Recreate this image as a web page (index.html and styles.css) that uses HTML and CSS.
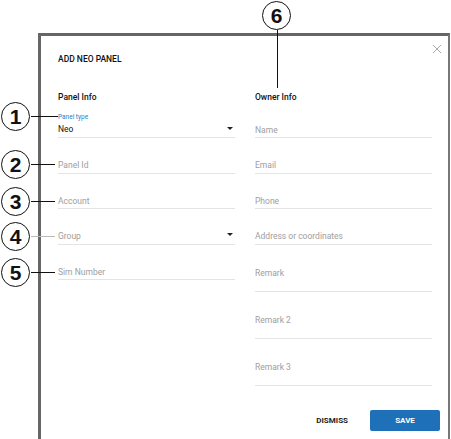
FILE: index.html
```html
<!DOCTYPE html>
<html>
<head>
<meta charset="utf-8">
<link rel="stylesheet" href="styles.css">
</head>
<body>
<div class="page">
  <div class="dialog">
    <div class="close">
      <svg width="10" height="10" viewBox="0 0 10 10"><path d="M1 1L9 9M9 1L1 9" stroke="#a8a8a8" stroke-width="1" fill="none"/></svg>
    </div>
    <div class="title">ADD NEO PANEL</div>
    <div class="columns">
      <div class="col">
        <div class="section">Panel Info</div>
        <div class="field first select">
          <div class="label">Panel type</div>
          <div class="value">Neo</div>
          <span class="caret"></span>
        </div>
        <div class="field"><span class="ph">Panel Id</span></div>
        <div class="field"><span class="ph">Account</span></div>
        <div class="field select"><span class="ph">Group</span><span class="caret"></span></div>
        <div class="field"><span class="ph">Sim Number</span></div>
      </div>
      <div class="col">
        <div class="section">Owner Info</div>
        <div class="field first"><span class="ph">Name</span></div>
        <div class="field"><span class="ph">Email</span></div>
        <div class="field"><span class="ph">Phone</span></div>
        <div class="field"><span class="ph">Address or coordinates</span></div>
        <div class="field tall"><span class="ph">Remark</span></div>
        <div class="field tall"><span class="ph">Remark 2</span></div>
        <div class="field tall"><span class="ph">Remark 3</span></div>
      </div>
    </div>
    <div class="actions">
      <button class="btn dismiss">DISMISS</button>
      <button class="btn save">SAVE</button>
    </div>
  </div>

  <div class="callout c1">1</div>
  <div class="callout c2">2</div>
  <div class="callout c3">3</div>
  <div class="callout c4">4</div>
  <div class="callout c5">5</div>
  <div class="callout c6">6</div>
  <div class="hline l1"></div>
  <div class="hline l2"></div>
  <div class="hline l3"></div>
  <div class="hline l4"></div>
  <div class="hline l5"></div>
  <div class="vline l6"></div>
</div>
</body>
</html>
```

FILE: styles.css
```css
html, body {
  margin: 0;
  padding: 0;
  background: #fff;
}
.page {
  position: relative;
  width: 451px;
  height: 439px;
  overflow: hidden;
  font-family: Roboto, "Liberation Sans", Arial, sans-serif;
}
.dialog {
  position: relative;
  margin: 33px 0 0 38px;
  width: 390px;
  height: 420px;
  border-top: 3px solid #666;
  border-left: 3px solid #666;
  border-right: 2px solid #777;
  padding: 0 0 0 17px;
  box-sizing: content-box;
}
.close {
  position: absolute;
  right: 6px;
  top: 8px;
  width: 10px;
  height: 10px;
  line-height: 0;
}
.title {
  font-size: 8.5px;
  font-weight: 500;
  color: #111;
  padding-top: 17px;
  height: 13px;
  line-height: 13px;
}
.columns {
  display: flex;
  gap: 20px;
  width: 374px;
  margin-top: 24px;
}
.col {
  flex: 1;
  display: flex;
  flex-direction: column;
}
.section {
  font-size: 8.5px;
  font-weight: 500;
  color: #111;
  height: 14px;
  line-height: 14px;
}
.field {
  position: relative;
  height: 35.5px;
  border-bottom: 1px solid #e4e4e4;
  box-sizing: border-box;
  font-size: 8.5px;
}
.field.first {
  height: 34px;
}
.ph {
  position: absolute;
  left: 0;
  top: 21px;
  line-height: 12px;
  color: #9e9e9e;
}
.field.first .ph {
  top: 20px;
}
.field.tall {
  height: 47px;
}
.field.tall .ph {
  top: 22px;
}
.label {
  position: absolute;
  left: 0;
  top: 9px;
  font-size: 6.5px;
  line-height: 8px;
  color: #2a7fc3;
}
.value {
  position: absolute;
  left: 0;
  top: 19px;
  line-height: 12px;
  color: #111;
}
.caret {
  position: absolute;
  right: 2px;
  top: 24px;
  width: 0;
  height: 0;
  border-left: 3.5px solid transparent;
  border-right: 3.5px solid transparent;
  border-top: 3.5px solid #222;
}
.field.first .caret {
  top: 22.5px;
}
.actions {
  display: flex;
  justify-content: flex-end;
  align-items: center;
  gap: 22px;
  width: 382px;
  margin-top: 24px;
}
.btn {
  font-family: Roboto, "Liberation Sans", Arial, sans-serif;
  font-size: 8px;
  font-weight: 700;
  border: none;
  padding: 0;
  cursor: pointer;
}
.dismiss {
  background: transparent;
  color: #222;
}
.save {
  width: 70px;
  height: 21px;
  background: #1e70b8;
  color: #fff;
  border-radius: 2px;
}
.callout {
  position: absolute;
  width: 27px;
  height: 27px;
  border: 1.5px solid #111;
  border-radius: 50%;
  background: #fff;
  font-family: "Liberation Sans", Arial, sans-serif;
  font-weight: 700;
  font-size: 21px;
  line-height: 27px;
  text-align: center;
  color: #111;
}
.c1 { left: 1px; top: 102px; }
.c2 { left: 1px; top: 150px; }
.c3 { left: 1px; top: 187px; }
.c4 { left: 1px; top: 222px; }
.c5 { left: 1px; top: 258px; }
.c6 { left: 262px; top: 1px; }
.hline {
  position: absolute;
  height: 1px;
  background: #111;
  left: 31px;
}
.l1 { top: 116px; width: 27px; }
.l2 { top: 164px; width: 24px; }
.l3 { top: 201px; width: 24px; }
.l4 { top: 236px; width: 24px; background: #bbb; }
.l5 { top: 272px; width: 24px; }
.vline {
  position: absolute;
  width: 1px;
  background: #111;
}
.l6 { left: 277px; top: 30px; height: 58px; }
```
